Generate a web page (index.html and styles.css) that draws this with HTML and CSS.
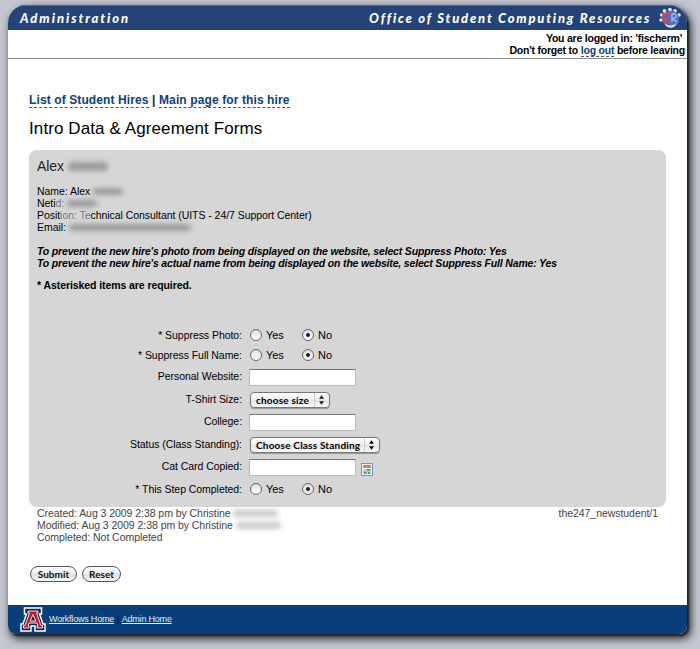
FILE: index.html
```html
<!DOCTYPE html>
<html lang="en">
<head>
<meta charset="utf-8">
<title>Intro Data &amp; Agreement Forms</title>
<link rel="stylesheet" href="styles.css">
</head>
<body>
<div class="page">
  <header class="banner">
    <span class="banner-left">Administration</span>
    <span class="banner-right">Office of Student Computing Resources</span>
    <svg class="gear" viewBox="0 0 24 24" width="24" height="24">
      <g fill="#dfe5f3"><circle cx="3.500" cy="9" r="1.700"/><circle cx="6.500" cy="5" r="1.900"/><circle cx="12" cy="3.600" r="1.900"/><circle cx="17" cy="5" r="1.900"/><circle cx="21" cy="9" r="1.800"/><circle cx="3" cy="14" r="1.700"/></g>
      <circle cx="13" cy="13" r="8.300" fill="#4a72c0"/>
      <path d="M6 17q6 5 13 0l-3 4q-5 2-8-1z" fill="#dce7fa"/>
      <path d="M12 8q-7-1-7 3 1 2 4 3 2 3-4 2" fill="none" stroke="#cf4552" stroke-width="2.600"/>
      <path d="M14 16V8q5-1 4 3l-3 2 4 3" fill="none" stroke="#9dbaf0" stroke-width="1.500"/>
    </svg>
  </header>
  <div class="login">
    <div class="login-user">You are logged in: 'fischerm'</div>
    <div class="login-out">Don't forget to <a href="#">log out</a> before leaving</div>
  </div>
  <main class="content">
    <nav class="crumbs"><a href="#">List of Student Hires</a> | <a href="#">Main page for this hire</a></nav>
    <h1>Intro Data &amp; Agreement Forms</h1>
    <section class="panel">
      <h2>Alex <i class="smudge s-title"></i></h2>
      <div class="info">
        <div>Name: Alex <i class="smudge s-name"></i></div>
        <div>Neti<span class="fade">d:</span> <i class="smudge s-netid"></i></div>
        <div>Posit<span class="fade">ion: Te</span>chnical Consultant (UITS - 24/7 Support Center)</div>
        <div>Email: <i class="smudge s-email"></i></div>
      </div>
      <div class="notes">
        <div>To prevent the new hire's photo from being displayed on the website, select Suppress Photo: Yes</div>
        <div>To prevent the new hire's actual name from being displayed on the website, select Suppress Full Name: Yes</div>
      </div>
      <div class="required">* Asterisked items are required.</div>
      <form class="fields">
        <label>* Suppress Photo:</label>
        <div class="radios"><i class="radio"></i><span>Yes</span><i class="radio on"></i><span>No</span></div>
        <label>* Suppress Full Name:</label>
        <div class="radios"><i class="radio"></i><span>Yes</span><i class="radio on"></i><span>No</span></div>
        <label class="up">Personal Website:</label>
        <div class="cell"><input type="text"></div>
        <label class="up">T-Shirt Size:</label>
        <div class="cell"><div class="select small"><span>choose size</span><svg width="15" height="14" viewBox="0 0 15 14"><path d="M7 2l2.600 3.600H4.400zM7 12L4.400 8.400h5.200z"/></svg></div></div>
        <label class="up">College:</label>
        <div class="cell"><input type="text"></div>
        <label class="up">Status (Class Standing):</label>
        <div class="cell"><div class="select large"><span>Choose Class Standing</span><svg width="15" height="14" viewBox="0 0 15 14"><path d="M7 2l2.600 3.600H4.400zM7 12L4.400 8.400h5.200z"/></svg></div></div>
        <label class="up">Cat Card Copied:</label>
        <div class="cell"><input type="text"><svg class="cal" width="12" height="13" viewBox="0 0 12 13"><rect x=".5" y=".5" width="11" height="12" fill="#eef4fd" stroke="#6c94d2"/><path d="M2 2h8v3H2z" fill="#f08030"/><path d="M2 6h8v5H2z" fill="#bdd3ef"/><path d="M6 6h3v2H6zM3 8.500h2.500V11H3zM7 9h2v2H7z" fill="#4ba64b"/></svg></div>
        <label>* This Step Completed:</label>
        <div class="radios"><i class="radio"></i><span>Yes</span><i class="radio on"></i><span>No</span></div>
      </form>
    </section>
    <div class="meta">
      <div>
        <div>Created: Aug 3 2009 2:38 pm by Christine <i class="smudge s-by"></i></div>
        <div>Modified: Aug 3 2009 2:38 pm by Christine <i class="smudge s-by"></i></div>
        <div>Completed: Not Completed</div>
      </div>
      <div class="form-id">the247_newstudent/1</div>
    </div>
    <div class="actions"><button class="submit">Submit</button><button class="reset">Reset</button></div>
  </main>
  <footer class="footer">
    <svg class="logo" width="26" height="25" viewBox="0 0 26 25">
      <path d="M4.500 1h17v6h-2l3.500 10h2v7H15v-5h-4v5H1v-7h2L6.500 7h-2z" fill="#0c234b" stroke="#fff" stroke-width="1.500"/>
      <path d="M8 4h10v2h-1.500l4.500 12.500h1.500V21h-5.500v-2h1l-1-3H9l-1 3h1v2H3.500v-2.500H5L9.500 6H8zM13 7.500L10.200 14h5.600z" fill="#c41230" fill-rule="evenodd" stroke="#fff" stroke-width=".9"/>
    </svg>
    <a class="wf" href="#">Workflows Home</a><span class="bar">|</span><a class="ah" href="#">Admin Home</a>
  </footer>
</div>
</body>
</html>
```
FILE: styles.css
```css
* { box-sizing: border-box; }
body {
  margin: 0;
  padding: 5px 13px 15px 8px;
  height: 649px;
  overflow: hidden;
  background: #c4c7d0;
  font-family: "Liberation Sans", Arial, sans-serif;
  font-size: 10.5px;
  letter-spacing: -.05px;
  line-height: 12px;
  color: #000;
}
.page {
  display: flex;
  flex-direction: column;
  height: 629px;
  border-radius: 18px 18px 8px 8px;
  background: #fff;
  box-shadow: 2px 2px 2px #222, 3px 4px 8px 1px rgba(0, 0, 0, .75);
  overflow: hidden;
}
.banner {
  display: flex;
  align-items: center;
  flex: 0 0 25px;
  padding: 0 5px 0 12px;
  background: #244379;
  border-top: 1px solid #55678b;
  color: #fff;
  font-family: Lato, sans-serif;
  font-weight: 900;
  font-style: italic;
  font-size: 13px;
  white-space: nowrap;
}
.banner-left { letter-spacing: 1.95px; }
.banner-right { margin-left: auto; letter-spacing: 1.8px; }
.gear { margin-left: 7px; flex: none; }
.login {
  flex: 0 0 29px;
  padding: 2px 2px 0 0;
  border-bottom: 1px solid #8d8d86;
  font-weight: bold;
  letter-spacing: -.22px;
  text-align: right;
}
.login-user { padding-right: 3px; }
.login a, .crumbs a {
  color: #0b3f7e;
  text-decoration: none;
  border-bottom: 1px dashed #555;
}
.content { flex: 1; padding: 34px 21px 0; }
.crumbs { font-size: 12px; font-weight: bold; line-height: 14px; letter-spacing: .11px; color: #222; }
.crumbs a { display: inline-block; line-height: 13px; }
h1 { margin: 11px 0 0; font-size: 17px; font-weight: normal; line-height: 20px; height: 24px; letter-spacing: .1px; }
.panel {
  height: 357px;
  margin-top: 7px;
  padding: 8px 8px 0;
  border-radius: 8px;
  background: #d6d6d6;
}
h2 { margin: 0 0 11px; font-size: 14px; font-weight: normal; line-height: 16px; color: #222; }
.info { height: 60px; white-space: nowrap; }
.fade { color: #777; }
.smudge {
  display: inline-block;
  height: 7px;
  border-radius: 4px;
  background: #888;
  filter: blur(2.5px);
  opacity: .75;
}
.s-title { width: 40px; height: 9px; }
.s-name { width: 30px; }
.s-netid { width: 30px; }
.s-email { width: 122px; }
.s-by { width: 45px; opacity: .45; }
.notes { font-weight: bold; font-style: italic; white-space: nowrap; letter-spacing: -.17px; }
.required { margin-top: 10px; font-weight: bold; letter-spacing: -.08px; }
.fields {
  display: grid;
  grid-template-columns: 205px 1fr;
  grid-template-rows: 20px 20px 25px 20px 25px 20px 25px 18px;
  column-gap: 7px;
  margin-top: 34px;
  align-items: center;
}
.fields label { text-align: right; }
.fields .up { padding-bottom: 3px; }
.radios, .cell { display: flex; align-items: center; }
.radios span { width: 37px; padding-left: 4px; font-size: 11px; }
.radio {
  width: 12px;
  height: 12px;
  margin-left: 1px;
  border: 1px solid #666;
  border-radius: 50%;
  background: linear-gradient(#ddd, #fff);
}
.radios .on { margin-left: 3px; }
.on { background: radial-gradient(circle, #222 0 1.5px, transparent 2.3px), linear-gradient(#ddd, #fff); }
input {
  width: 107px;
  height: 17px;
  padding: 0;
  border: 1px solid #bbb;
  border-top: 1.5px solid #777;
  background: #fff;
}
.select {
  display: flex;
  align-items: center;
  height: 16px;
  margin-left: 1px;
  padding-left: 5px;
  border: 1px solid #777;
  border-radius: 4px;
  background: linear-gradient(#fff, #eee 50%, #e2e2e2 51%, #fafafa);
  box-shadow: 0 1px 1px rgba(0, 0, 0, .3);
  font-family: Lato, sans-serif;
  font-weight: bold;
  font-size: 10px;
  letter-spacing: .2px;
  white-space: nowrap;
}
.select svg { margin-left: auto; border-left: 1px solid #ccc; }
.small { width: 80px; }
.large { width: 130px; }
.cal { margin: 4px 0 0 5px; }
.meta { display: flex; justify-content: space-between; padding: 0 8px; color: #444; height: 36px; white-space: nowrap; }
.actions { display: flex; gap: 5px; margin-top: 23px; padding-left: 1px; }
button {
  height: 16px;
  padding: 0;
  border: 1px solid #555;
  border-radius: 8px;
  background: linear-gradient(#fff, #eee 50%, #dedede 51%, #fafafa);
  font-family: Lato, sans-serif;
  font-weight: bold;
  font-size: 10px;
  line-height: 12px;
  color: #111;
}
.submit { width: 47px; }
.reset { width: 39px; }
.footer {
  display: flex;
  align-items: center;
  flex: 0 0 29px;
  padding: 0 0 2px 12px;
  background: #083f7b;
  color: #001;
  font-size: 9px;
  letter-spacing: -.2px;
}
.logo { margin-top: 2px; }
.footer a { color: #e4ecf5; text-decoration: underline; }
.wf { margin-left: 3px; }
.bar { margin: 0 2.5px 0 3px; }
```
